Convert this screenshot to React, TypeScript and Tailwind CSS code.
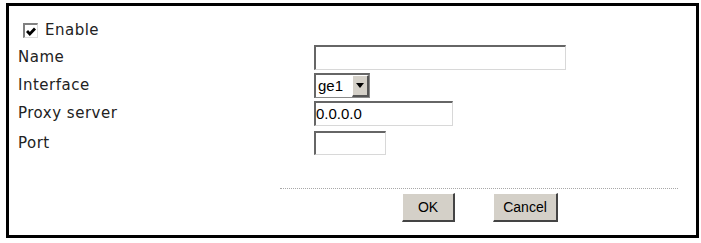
import React from 'react';

const Label = ({ children }: { children: React.ReactNode }) => (
  <div className="w-[296px] text-[15px] leading-none tracking-[0.5px] text-[#222]">{children}</div>
);

const TextBox = ({ w, value, h = 'h-[25px]' }: { w: string; value?: string; h?: string }) => (
  <div
    className={`${w} ${h} bg-white border-t-2 border-l-2 border-b border-r border-t-[#666] border-l-[#666] border-b-[#d8d8d8] border-r-[#d8d8d8] flex items-center text-[15px] font-['Liberation_Sans',Arial,sans-serif] text-black`}
  >
    {value}
  </div>
);

const App = () => {
  return (
    <div className="w-[701px] h-[243px] bg-white pt-[3px] pl-[6px] overflow-hidden font-['DejaVu_Sans',Verdana,sans-serif]">
      <div className="w-[693px] h-[235px] border-[3px] border-black flex flex-col">
        {/* enable */}
        <div className="mt-[17px] ml-[14px] flex items-center gap-[7px]">
          <div className="w-[15px] h-[15px] bg-white border-t-2 border-l-2 border-b border-r border-t-[#808080] border-l-[#808080] border-b-[#dcdcdc] border-r-[#dcdcdc] flex items-center justify-center">
            <svg width="10" height="9" viewBox="0 0 10 9">
              <path d="M1 4 L3.8 7 L9 1.5" fill="none" stroke="#000" strokeWidth="2.8" />
            </svg>
          </div>
          <span className="text-[15px] leading-none tracking-[0.5px] text-[#222]">Enable</span>
        </div>

        <div className="ml-[9px] mt-[7px] flex flex-col">
          <div className="flex items-center">
            <Label>Name</Label>
            <TextBox w="w-[252px]" />
          </div>
          <div className="flex items-center mt-[3px]">
            <Label>Interface</Label>
            <div className="w-[56px] h-[25px] flex border-t-2 border-l-2 border-b border-r border-t-[#666] border-l-[#666] border-b-[#8a8a8a] border-r-[#8a8a8a] bg-white">
              <div className="flex-1 flex items-center pl-[2px] text-[15px] font-['Liberation_Sans',Arial,sans-serif] text-black">
                ge1
              </div>
              <div className="w-[17px] h-full bg-[#d4d0c8] border-t border-l border-b-2 border-r-2 border-t-white border-l-white border-b-[#555] border-r-[#555] flex items-center justify-center">
                <svg width="8" height="5" viewBox="0 0 8 5">
                  <path d="M0 0 H8 L4 5 Z" fill="#000" />
                </svg>
              </div>
            </div>
          </div>
          <div className="flex items-center mt-[3px]">
            <Label>Proxy server</Label>
            <TextBox w="w-[139px]" value="0.0.0.0" />
          </div>
          <div className="flex items-center mt-[5px]">
            <Label>Port</Label>
            <TextBox w="w-[72px]" h="h-[24px]" />
          </div>
        </div>

        <div className="ml-[271px] mt-[33px] w-[398px] border-t border-dotted border-[#a8a8a8]" />

        <div className="ml-[393px] mt-[4px] flex gap-[38px]">
          <button className="w-[53px] h-[29px] bg-[#d4d0c8] border-t border-l border-b-2 border-r-2 border-t-white border-l-white border-b-[#444] border-r-[#444] text-[14px] font-['Liberation_Sans',Arial,sans-serif] text-black">
            OK
          </button>
          <button className="w-[65px] h-[29px] bg-[#d4d0c8] border-t border-l border-b-2 border-r-2 border-t-white border-l-white border-b-[#444] border-r-[#444] text-[14px] font-['Liberation_Sans',Arial,sans-serif] text-black">
            Cancel
          </button>
        </div>
      </div>
    </div>
  );
};

export default App;
